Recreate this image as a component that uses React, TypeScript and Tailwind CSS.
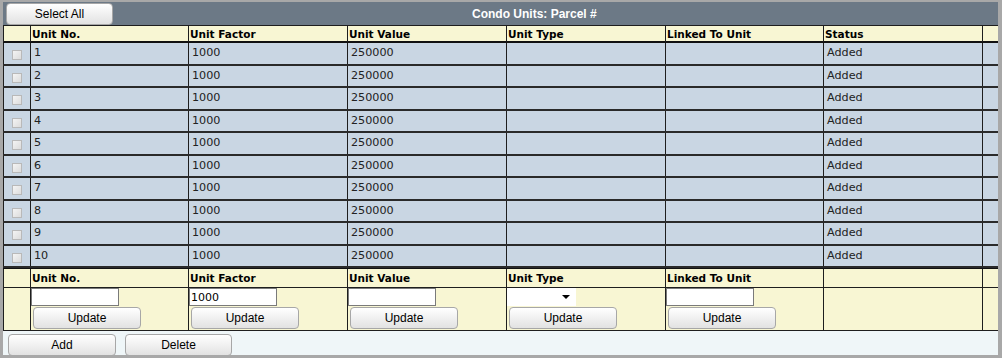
import React from 'react';

const COLS = 'grid grid-cols-[27px_158px_159px_159px_159px_158px_159px_1fr]';
const cell = 'border-l border-[#1e1e1e]';

const headers = ['Unit No.', 'Unit Factor', 'Unit Value', 'Unit Type', 'Linked To Unit', 'Status'];

const units = Array.from({ length: 10 }, (_, i) => ({
  no: String(i + 1),
  factor: '1000',
  value: '250000',
  type: '',
  linked: '',
  status: 'Added',
}));

const Btn: React.FC<{ label: string; className?: string }> = ({ label, className = '' }) => (
  <button
    className={`h-[22px] rounded-[4px] border border-[#a7a7a7] bg-gradient-to-b from-white to-[#e2e2e2] text-[12px] text-black font-['Liberation_Sans',Arial,sans-serif] ${className}`}
  >
    {label}
  </button>
);

const CheckBox: React.FC = () => (
  <span className="block w-[10px] h-[10px] border border-[#b9b9b9] bg-gradient-to-br from-[#f4f4f4] to-[#dcdcdc]" />
);

export default function App() {
  return (
    <div className="w-[1002px] h-[358px] overflow-hidden border-t-2 border-l-[3px] border-r-4 border-b-[3px] border-[#a8a8a8] bg-[#eff6f8] font-['DejaVu_Sans',Verdana,sans-serif]">
      {/* title bar */}
      <div className="h-[23px] bg-[#6c7986] flex items-center">
        <Btn label="Select All" className="ml-[3px] w-[107px] h-[21px] mt-[1px]" />
        <span className="ml-[359px] text-white text-[12px] font-bold font-['Liberation_Sans',Arial,sans-serif]">
          Condo Units: Parcel #
        </span>
      </div>

      <div className="border-t border-[#1e1e1e]">
        {/* column headers */}
        <div className={`${COLS} h-[17px] bg-[#f8f6d3] border-b-2 border-[#111]`}>
          <div className={cell} />
          {headers.map(h => (
            <div key={h} className={`${cell} pl-[1px] text-[10.5px] leading-[16px] font-bold text-black`}>{h}</div>
          ))}
          <div className={cell} />
        </div>

        {units.map(u => (
          <div key={u.no} className={`${COLS} h-[22.5px] bg-[#c9d6e3] border-b-2 border-[#2a2a2a] text-[11.2px] text-[#222]`}>
            <div className={`${cell} flex justify-center pt-[7px]`}>
              <CheckBox />
            </div>
            <div className={`${cell} pl-[3px] pt-[2px]`}>{u.no}</div>
            <div className={`${cell} pl-[3px] pt-[2px]`}>{u.factor}</div>
            <div className={`${cell} pl-[3px] pt-[2px]`}>{u.value}</div>
            <div className={`${cell} pl-[3px] pt-[2px]`}>{u.type}</div>
            <div className={`${cell} pl-[3px] pt-[2px]`}>{u.linked}</div>
            <div className={`${cell} pl-[3px] pt-[2px]`}>{u.status}</div>
            <div className={cell} />
          </div>
        ))}

        {/* add / edit footer */}
        <div className={`${COLS} h-[20px] bg-[#f8f6d3] border-t border-b border-t-[#111] border-b-[#1e1e1e]`}>
          <div className={cell} />
          {headers.slice(0, 5).map(h => (
            <div key={h} className={`${cell} pl-[1px] pt-[1px] text-[10.5px] leading-[17px] font-bold text-black`}>{h}</div>
          ))}
          <div className={cell} />
          <div className={cell} />
        </div>
        <div className={`${COLS} h-[43px] bg-[#f8f6d3] border-b border-[#1e1e1e]`}>
          <div className={cell} />
          {['', '1000', '', 'select', ''].map((v, i) => (
            <div key={i} className={`${cell} flex flex-col items-start`}>
              {v === 'select' ? (
                <div className="w-[69px] h-[18px] bg-white flex items-center justify-end pr-[6px]">
                  <span className="w-0 h-0 border-l-[4px] border-r-[4px] border-t-[4px] border-l-transparent border-r-transparent border-t-black" />
                </div>
              ) : (
                <input
                  readOnly
                  value={v}
                  className="w-[88px] h-[18px] border border-[#7a7a7a] bg-white px-[1px] text-[11px] text-black outline-none"
                />
              )}
              <Btn label="Update" className="ml-[2px] mt-[1px] w-[108px]" />
            </div>
          ))}
          <div className={cell} />
          <div className={cell} />
        </div>
      </div>

      <div className="flex gap-[9px] pl-[5px] pt-[3px]">
        <Btn label="Add" className="w-[108px]" />
        <Btn label="Delete" className="w-[107px]" />
      </div>
    </div>
  );
}
